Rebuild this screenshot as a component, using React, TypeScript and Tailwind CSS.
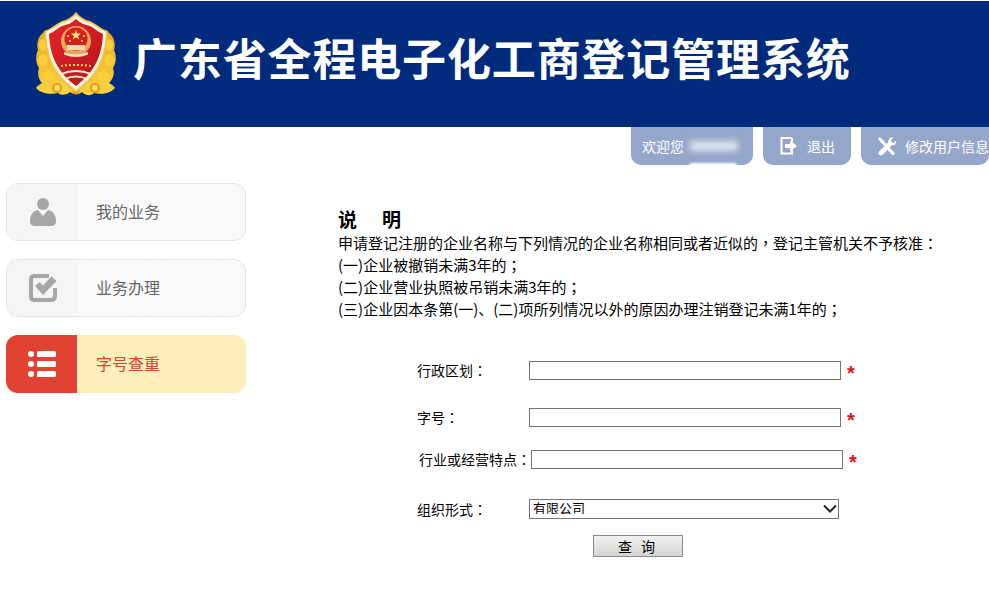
import { FC, ReactNode } from "react";

const font = "font-['Noto_Sans_CJK_SC','Noto_Sans',sans-serif]";

// full-width punctuation sits centred in the cell in the reference, TC cut does that
const P: FC<{ children: ReactNode }> = ({ children }) => (
  <span className="font-['Noto_Sans_CJK_TC',sans-serif]">{children}</span>
);

const Logo: FC = () => (
  <svg width="92" height="94" viewBox="0 0 92 94" className="shrink-0">
    <defs>
      <linearGradient id="gold" x1="0" y1="0" x2="0" y2="1">
        <stop offset="0" stopColor="#e9a81c" />
        <stop offset="1" stopColor="#fbd445" />
      </linearGradient>
      <linearGradient id="red" x1="0" y1="0" x2="1" y2="1">
        <stop offset="0" stopColor="#e2262a" />
        <stop offset="1" stopColor="#b8121a" />
      </linearGradient>
    </defs>
    {/* laurel */}
    <path
      d="M14 24 C8 28 6 36 8 42 C5 48 6 56 9 60 C7 66 9 72 12 75 C9 77 7 78 6 80 C10 85 20 87 28 85 C31 88 37 87 40 84 C44 87 49 87 52 84 C56 88 61 88 64 85 C72 87 81 85 85 80 C84 78 82 77 79 75 C83 71 85 66 83 60 C86 56 87 48 84 42 C86 36 84 28 78 24 L46 76 Z"
      fill="url(#gold)"
    />
    <g fill="#f9cf3c">
      <ellipse cx="13" cy="37" rx="4" ry="6" />
      <ellipse cx="79" cy="37" rx="4" ry="6" />
      <ellipse cx="13" cy="52" rx="5" ry="6" />
      <ellipse cx="79" cy="52" rx="5" ry="6" />
      <ellipse cx="19" cy="68" rx="6" ry="5" />
      <ellipse cx="73" cy="68" rx="6" ry="5" />
    </g>
    <g fill="#e39a14">
      <circle cx="27" cy="80" r="5" />
      <circle cx="65" cy="80" r="5" />
      <circle cx="46" cy="83" r="3.500" />
    </g>
    <g fill="#fde06a">
      <circle cx="27" cy="80" r="3" />
      <circle cx="65" cy="80" r="3" />
    </g>
    {/* shield */}
    <path
      d="M46 4 C50 9 55 12 60 13 C65 15 71 21 78 23 C77 45 72 67 46 85 C20 67 15 45 14 23 C21 21 27 15 32 13 C37 12 42 9 46 4 Z"
      fill="#f3c24a"
    />
    <path
      d="M46 7 C50 11 55 14 60 15 C65 17 70 22 76 24 C75 45 70 65 46 82 C22 65 17 45 16 24 C22 22 27 17 32 15 C37 14 42 11 46 7 Z"
      fill="#fff6dc"
    />
    <path
      d="M46 11 C50 15 55 17 60 18 C64 20 68 24 73 26 C72 45 67 62 46 78 C25 62 20 45 19 26 C24 24 28 20 32 18 C37 17 42 15 46 11 Z"
      fill="url(#red)"
    />
    {/* emblem */}
    <circle cx="46" cy="33" r="15" fill="#eaa65a" />
    <circle cx="46" cy="31" r="11.500" fill="#d4201f" />
    <path d="M46 22 l1.300 3.600 h3.800 l-3 2.300 1.100 3.600 -3.200 -2.200 -3.200 2.200 1.100 -3.600 -3 -2.300 h3.800 z" fill="#f9e26e" />
    <g fill="#f9e26e">
      <circle cx="38" cy="28" r="1" />
      <circle cx="54" cy="28" r="1" />
      <circle cx="40" cy="33" r="1" />
      <circle cx="52" cy="33" r="1" />
    </g>
    <path d="M37 37 h18 v5 h-18 z" fill="#f6d9b0" />
    <path d="M34 44 q12 5 24 0 v2.500 q-12 5 -24 0 z" fill="#fbe6c4" />
    {/* seal lettering and waves */}
    <path d="M31 58 q15 -2 30 0" stroke="#f5cf6a" strokeWidth="2" strokeDasharray="2 2" fill="none" />
    <path d="M31 66 q15 -6 30 0" stroke="#fff1d0" strokeWidth="1.800" fill="none" />
    <path d="M35 71 q11 -5 22 0" stroke="#fff1d0" strokeWidth="1.800" fill="none" />
  </svg>
);

const UserIcon: FC = () => (
  <svg width="26" height="29" viewBox="0 0 26 29">
    <circle cx="13" cy="6" r="6" fill="#a6a6a6" />
    <path
      d="M8 12 L13 18 L18 12 C23 13 26 17 26 23 C26 27 24 28 20 28 H6 C2 28 0 27 0 23 C0 17 3 13 8 12 Z"
      fill="#a6a6a6"
    />
  </svg>
);

const CheckIcon: FC = () => (
  <svg width="28" height="28" viewBox="0 0 28 28">
    <path
      d="M20 2 H5 C3 2 2 3.500 2 5.500 V22 C2 24.500 3 26 5 26 H22 C24.500 26 26 24.500 26 22 V14"
      stroke="#a6a6a6"
      strokeWidth="4"
      fill="none"
    />
    <path d="M6 12 L10.500 8 L14 11.500 L22.500 2.500 L27.500 7 L14 21 Z" fill="#a6a6a6" />
  </svg>
);

const ListIcon: FC = () => (
  <svg width="28" height="26" viewBox="0 0 28 26" fill="#fff">
    <circle cx="3" cy="3" r="3" />
    <circle cx="3" cy="13" r="3" />
    <circle cx="3" cy="23" r="3" />
    <rect x="9" y="0" width="19" height="6" rx="1.500" />
    <rect x="9" y="10" width="19" height="6" rx="1.500" />
    <rect x="9" y="20" width="19" height="6" rx="1.500" />
  </svg>
);

const ExitIcon: FC = () => (
  <svg width="18" height="18" viewBox="0 0 18 18">
    <path d="M12 1 H1.500 V16.500 H12 V13" stroke="#fff" strokeWidth="2" fill="none" />
    <path d="M12 5 V1" stroke="#fff" strokeWidth="2" />
    <path d="M5 7 H10 V3.500 L17 9 L10 14.500 V11 H5 Z" fill="#fff" />
  </svg>
);

const ToolsIcon: FC = () => (
  <svg width="19" height="19" viewBox="0 0 19 19" fill="#fff">
    <path d="M1.500 0 L5 3 L12 11 L17 16 L15.500 18.500 L13 17 L8 11 L2.500 5 L0 2 Z" />
    <path d="M18 3.500 L15.500 6 L13.500 5 L13 3 L15.500 0.500 C12.500 0 10 2 10.500 5 L1 14.500 C0 16 0.500 17.500 1.500 18 C2.500 19 4 18.500 5 17.500 L14 8 C17 9 19 6.500 18 3.500 Z" />
  </svg>
);

const Tab: FC<{ className: string; children: ReactNode }> = ({ className, children }) => (
  <div className={`relative flex h-[38px] items-center rounded-b-[10px] bg-[#94a6c9] text-[14px] text-white ${className}`}>
    {children}
  </div>
);

const SideItem: FC<{ icon: ReactNode; label: string; active?: boolean }> = ({ icon, label, active }) => (
  <div
    className={
      active
        ? "flex h-[58px] w-[240px] overflow-hidden rounded-[12px] bg-[#feeebb]"
        : "flex h-[58px] w-[240px] overflow-hidden rounded-[12px] border border-[#e5e5e5] bg-[#fafafa] bg-[repeating-linear-gradient(45deg,#fbfbfb_0,#fbfbfb_2px,#f7f7f7_2px,#f7f7f7_3px)]"
    }
  >
    <div
      className={
        active
          ? "flex w-[71px] items-center justify-center bg-[#e24232]"
          : "flex w-[71px] items-center justify-center bg-[#f5f5f5]"
      }
    >
      {icon}
    </div>
    <div
      className={
        active
          ? "flex items-center pb-[2px] pl-[19px] text-[16px] text-[#d2452f]"
          : "flex items-center pb-[2px] pl-[18px] text-[16px] text-[#666]"
      }
    >
      {label}
    </div>
  </div>
);

const Star: FC = () => (
  <span className="ml-[6px] h-[19px] translate-y-[2px] font-['Liberation_Sans',sans-serif] text-[20px] font-bold leading-none text-[#e0101c]">
    *
  </span>
);

const Label: FC<{ children: ReactNode }> = ({ children }) => (
  <label className="h-[19px] w-[112px] whitespace-nowrap text-[14px] leading-[19px] text-black">
    {children}
    <P>：</P>
  </label>
);

const FieldRow: FC<{ label: string; className: string }> = ({ label, className }) => (
  <div className={`flex items-center ${className}`}>
    <Label>{label}</Label>
    <input className="h-[19px] w-[312px] border border-[#767676] bg-white" />
    <Star />
  </div>
);

export default function App() {
  return (
    <div className={`h-[613px] w-[989px] overflow-hidden bg-white ${font}`}>
      <header className="mt-px flex h-[126px] items-start bg-[#002a7c] pl-[30px] pt-[7px]">
        <Logo />
        <h1 className="ml-[11px] mt-[23px] whitespace-nowrap text-[44px] font-bold leading-[52px] tracking-[0.85px] text-white">
          广东省全程电子化工商登记管理系统
        </h1>
      </header>

      <nav className="flex h-[38px] justify-end gap-[10px]">
        <Tab className="w-[122px] pl-[11px]">
          <span>欢迎您</span>
          <span className="ml-[6px] h-[10px] w-[48px] bg-[#dfe4ef] blur-[3px]" />
          <span className="absolute bottom-[-3px] left-[58px] h-[5px] w-[48px] rounded-full bg-white blur-[1px]" />
        </Tab>
        <Tab className="w-[88px] pl-[17px]">
          <ExitIcon />
          <span className="ml-[9px]">退出</span>
        </Tab>
        <Tab className="w-[128px] whitespace-nowrap pl-[17px]">
          <ToolsIcon />
          <span className="ml-[8px]">修改用户信息</span>
        </Tab>
      </nav>

      <main className="flex">
        <aside className="ml-[6px] mt-[18px] flex w-[240px] shrink-0 flex-col gap-[18px]">
          <SideItem icon={<UserIcon />} label="我的业务" />
          <SideItem icon={<CheckIcon />} label="业务办理" />
          <SideItem icon={<ListIcon />} active label="字号查重" />
        </aside>

        <section className="ml-[92px] pt-[41px] text-[15px] text-black">
          <h2 className="flex h-[26px] gap-[25px] text-[19px] font-bold leading-[26px]">
            <span>说</span>
            <span>明</span>
          </h2>
          <div className="whitespace-nowrap leading-[22px]">
            <p>
              申请登记注册的企业名称与下列情况的企业名称相同或者近似的<P>，</P>登记主管机关不予核准<P>：</P>
            </p>
            <p>
              (一)企业被撤销未满3年的<P>；</P>
            </p>
            <p>
              (二)企业营业执照被吊销未满3年的<P>；</P>
            </p>
            <p>
              (三)企业因本条第(一)、(二)项所列情况以外的原因办理注销登记未满1年的<P>；</P>
            </p>
          </div>

          <form className="ml-[79px] mt-[41px]">
            <FieldRow label="行政区划" className="" />
            <FieldRow label="字号" className="mt-[28px]" />
            <FieldRow label="行业或经营特点" className="ml-[2px] mt-[23px]" />
            <div className="mt-[30px] flex items-center">
              <Label>组织形式</Label>
              <div className="relative">
                <select className="block h-[20px] w-[310px] appearance-none border border-[#767676] bg-white pb-[3px] pl-[3px] text-[13px] leading-none text-black">
                  <option>有限公司</option>
                </select>
                <svg
                  width="14"
                  height="9"
                  viewBox="0 0 14 9"
                  className="pointer-events-none absolute right-[2px] top-[5px]"
                >
                  <path d="M1 1.500 L7 7.500 L13 1.500" stroke="#222" strokeWidth="2" fill="none" />
                </svg>
              </div>
            </div>
            <div className="ml-[176px] mt-[16px]">
              <button
                type="button"
                className="h-[22px] w-[90px] border border-[#8a8a8a] bg-gradient-to-b from-[#f2f2f2] to-[#d4d4d4] text-[14px] leading-none tracking-[3px] text-black"
              >
                查 询
              </button>
            </div>
          </form>
        </section>
      </main>
    </div>
  );
}
